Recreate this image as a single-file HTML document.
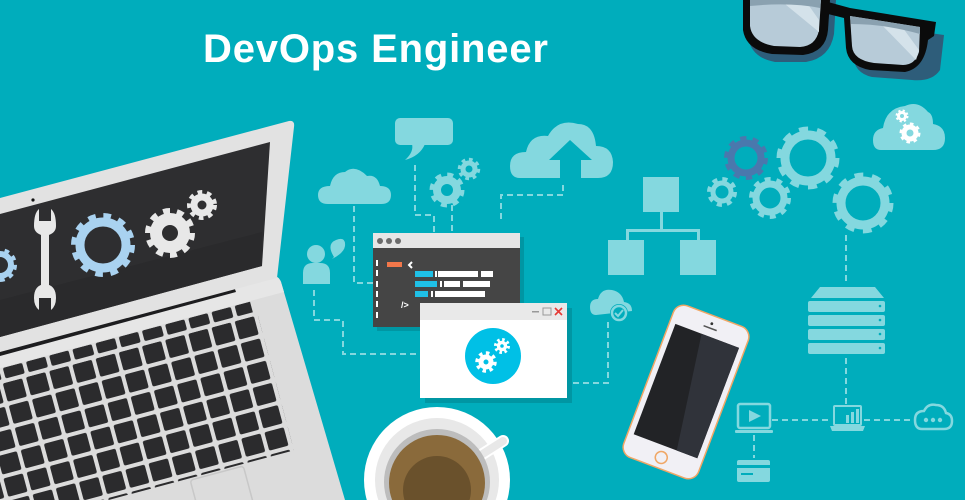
<!DOCTYPE html>
<html><head><meta charset="utf-8"><style>
html,body{margin:0;padding:0;background:#00adbc;overflow:hidden;width:965px;height:500px}
svg{display:block}
</style></head><body>
<svg width="965" height="500" viewBox="0 0 965 500" xmlns="http://www.w3.org/2000/svg">
<defs>
<pattern id="keysF" patternUnits="userSpaceOnUse" width="24" height="13" x="-2" y="18"><rect x="0" y="0" width="20" height="11" rx="2" fill="#2b2b2d"/></pattern>
<pattern id="keysM" patternUnits="userSpaceOnUse" width="24" height="23" x="-6" y="33"><rect x="0" y="0" width="20" height="19" rx="2" fill="#2b2b2d"/></pattern>
<clipPath id="vp"><rect width="965" height="500"/></clipPath>
</defs>
<g clip-path="url(#vp)">
<rect width="965" height="500" fill="#00adbc"/>

<!-- title -->
<text x="203" y="62" font-family="Liberation Sans, Arial, sans-serif" font-weight="bold" font-size="40" fill="#fff" textLength="345">DevOps Engineer</text>

<!-- glasses -->
<g>
 <path d="M748,0 L836,0 L834,34 Q830,58 806,62 L775,62 Q752,58 748,38 Z" fill="#2e5d7a"/>
 <path d="M852,22 L944,35 L940,70 Q932,82 912,80 L872,77 Q854,73 853,55 Z" fill="#2e5d7a"/>
 <path d="M743,0 L830,0 L828,30 Q826,52 803,55 L772,54 Q746,50 743,30 Z" fill="#0b0b0b"/>
 <path d="M828,2 L850,8 L936,22 L934,36 L928,40 Q925,68 905,72 L870,70 Q848,66 846,48 L844,18 L828,14 Z" fill="#0b0b0b"/>
 <path d="M750,0 L821,0 L819,30 Q816,46 800,47 L774,46 Q752,42 750,26 Z" fill="#b7cbd8"/>
 <path d="M850,16 L920,27 L919,52 Q915,65 903,65 L874,63 Q853,60 852,46 Z" fill="#b7cbd8"/>
 <path d="M780,0 L805,0 L819,20 L819,32 Z" fill="#d4e2ea"/>
 <path d="M878,21 L900,24 L919,50 L916,60 Z" fill="#d4e2ea"/>
 <path d="M750,0 L821,0 L820,8 Q790,2 750,6 Z" fill="#8aa1b0"/>
 <path d="M850,16 L920,27 L920,34 Q885,24 851,24 Z" fill="#8aa1b0"/>
</g>

<!-- dashed connectors -->
<g fill="none" stroke="#84d8df" stroke-width="2" stroke-dasharray="6 4">
 <path d="M354,206 V283 H373"/>
 <path d="M415,165 V215 H434 V233"/>
 <path d="M452,205 V233"/>
 <path d="M563,185 V195 H501 V220"/>
 <path d="M314,290 V320 H343 V354 H420"/>
 <path d="M608,322 V383 H567"/>
 <path d="M846,235 V285"/>
 <path d="M846,358 V405"/>
 <path d="M772,420 H832"/>
 <path d="M864,420 H912"/>
 <path d="M754,435 V458"/>
</g>

<!-- light icons -->
<g fill="#84d8df">
 <rect x="395" y="118" width="58" height="27" rx="5"/>
 <path d="M412,144 L425,144 Q420,156 405,160 Q414,152 412,144 Z"/>
 <path d="M328,204 Q318,204 318,195 Q318,186 330,186 Q333,172 345,172 Q355,164 367,176 Q377,174 380,186 Q391,186 391,195 Q391,204 381,204 Z"/>
 <path d="M520,178 Q510,178 510,166 Q510,152 526,152 Q530,134 548,136 Q558,118 578,124 Q594,124 596,146 Q612,146 613,162 Q613,178 598,178 L581,178 L581,160 L592,160 L570,140 L549,160 L560,160 L560,178 Z"/>
 <rect x="643" y="177" width="36" height="35"/>
 <rect x="608" y="240" width="36" height="35"/>
 <rect x="680" y="240" width="36" height="35"/>
 <path d="M660,212 h3 v17 h37 v11 h-3 v-8 h-68 v8 h-3 v-11 h34 z"/>
 <circle cx="316" cy="254" r="9"/>
 <path d="M303,284 V273 Q303,263 313,263 H320 Q330,263 330,273 V284 Z"/>
 <path d="M334,257 Q326,244 336,240 Q346,236 345,246 Q344,253 332,259 Z"/>
 <path d="M596,315 Q590,315 590,307 Q590,299 598,299 Q601,288 612,290 Q622,292 624,302 Q632,303 632,311 Z"/>
 <circle cx="619" cy="313" r="9" fill="#00adbc"/>
 <circle cx="619" cy="313" r="7" fill="none" stroke="#84d8df" stroke-width="2.5"/>
 <path d="M615,313 l3,3 l5,-6" fill="none" stroke="#84d8df" stroke-width="2"/>
 <path d="M820,287 H875 L884,298 H811 Z"/>
 <rect x="808" y="301" width="77" height="11" rx="2"/>
 <rect x="808" y="315" width="77" height="11" rx="2"/>
 <rect x="808" y="329" width="77" height="11" rx="2"/>
 <rect x="808" y="343" width="77" height="11" rx="2"/>
 <g fill="#00adbc"><circle cx="880" cy="306" r="1.3"/><circle cx="880" cy="320" r="1.3"/><circle cx="880" cy="334" r="1.3"/><circle cx="880" cy="348" r="1.3"/></g>
 <path d="M881,150 Q873,150 873,140 Q873,130 883,128 Q886,108 905,106 Q918,100 928,112 Q933,114 933,124 Q945,126 945,138 Q945,150 933,150 Z"/>
 <rect x="738" y="404" width="32" height="24" rx="2" fill="none" stroke="#84d8df" stroke-width="2.5"/>
 <path d="M749,410 L761,416 L749,422 Z"/>
 <rect x="735" y="430" width="38" height="3" rx="1"/>
 <rect x="737" y="460" width="33" height="22" rx="2"/>
 <rect x="737" y="465" width="33" height="3" fill="#00adbc"/>
 <rect x="741" y="473" width="12" height="2" fill="#00adbc"/>
 <rect x="834" y="406" width="27" height="19" rx="1" fill="none" stroke="#84d8df" stroke-width="2"/>
 <rect x="846" y="415" width="3" height="8"/><rect x="851" y="412" width="3" height="11"/><rect x="856" y="409" width="3" height="14"/>
 <path d="M830,426 H865 L863,431 H832 Z"/>
 <path d="M922,429 Q915,429 915,420 Q915,411 924,411 Q928,403 936,405 Q944,405 946,413 Q952,414 952,421 Q952,429 944,429 Z" fill="none" stroke="#84d8df" stroke-width="2.5"/>
 <circle cx="926" cy="420" r="2.2"/><circle cx="933" cy="420" r="2.2"/><circle cx="940" cy="420" r="2.2"/>
</g>

<!-- gears -->
<g fill="none">
 <g stroke="#84d8df">
  <circle cx="447" cy="190" r="10" stroke-width="8"/><circle cx="447" cy="190" r="15" stroke-width="5" stroke-dasharray="5.9 5.9"/>
  <circle cx="469" cy="169" r="6" stroke-width="5"/><circle cx="469" cy="169" r="9.5" stroke-width="3.5" stroke-dasharray="3.7 3.7"/>
  <circle cx="808" cy="158" r="23" stroke-width="9"/><circle cx="808" cy="158" r="29" stroke-width="5" stroke-dasharray="9.1 9.1"/>
  <circle cx="722" cy="192" r="9" stroke-width="5"/><circle cx="722" cy="192" r="13" stroke-width="4" stroke-dasharray="5.1 5.1"/>
  <circle cx="770" cy="198" r="14" stroke-width="7"/><circle cx="770" cy="198" r="19" stroke-width="4" stroke-dasharray="6 6"/>
  <circle cx="863" cy="203" r="22" stroke-width="9"/><circle cx="863" cy="203" r="28" stroke-width="5" stroke-dasharray="8.8 8.8"/>
 </g>
 <g stroke="#4a78ad">
  <circle cx="746" cy="158" r="15" stroke-width="7"/><circle cx="746" cy="158" r="20" stroke-width="4" stroke-dasharray="6.3 6.3"/>
 </g>
 <g stroke="#fff">
  <circle cx="910" cy="133" r="6" stroke-width="5"/><circle cx="910" cy="133" r="9" stroke-width="3" stroke-dasharray="3.5 3.5"/>
  <circle cx="902" cy="116" r="3.5" stroke-width="3"/><circle cx="902" cy="116" r="5.5" stroke-width="2" stroke-dasharray="2.2 2.2"/>
 </g>
</g>

<!-- code window -->
<rect x="377" y="237" width="147" height="94" fill="#0096a3"/>
<rect x="373" y="233" width="147" height="94" fill="#454545"/>
<rect x="373" y="233" width="147" height="15" fill="#e6e6e6"/>
<g fill="#6b6b6b"><circle cx="380" cy="241" r="3"/><circle cx="389" cy="241" r="3"/><circle cx="398" cy="241" r="3"/></g>
<g fill="#fff">
 <rect x="376" y="260" width="2" height="6"/><rect x="376" y="270" width="2" height="6"/><rect x="376" y="281" width="2" height="6"/><rect x="376" y="291" width="2" height="6"/><rect x="376" y="301" width="2" height="6"/><rect x="376" y="312" width="2" height="6"/>
 <path d="M412,262 L409,265 L412,268" fill="none" stroke="#fff" stroke-width="2"/>
 <rect x="438" y="271" width="40" height="6"/><rect x="481" y="271" width="12" height="6"/>
 <rect x="444" y="281" width="16" height="6"/><rect x="463" y="281" width="27" height="6"/>
 <rect x="435" y="291" width="50" height="6"/>
 <rect x="435" y="271" width="2" height="6"/><rect x="440" y="281" width="2" height="6"/><rect x="431" y="291" width="2" height="6"/>
 <text x="401" y="308" font-family="Liberation Sans, sans-serif" font-size="9" font-weight="bold" fill="#fff">/&gt;</text>
</g>
<rect x="387" y="262" width="15" height="5" fill="#f2774a"/>
<rect x="415" y="271" width="18" height="6" fill="#1fc0e6"/>
<rect x="415" y="281" width="22" height="6" fill="#1fc0e6"/>
<rect x="415" y="291" width="13" height="6" fill="#1fc0e6"/>

<!-- white window -->
<rect x="425" y="308" width="147" height="95" fill="#0096a3"/>
<rect x="420" y="303" width="147" height="95" fill="#fff"/>
<rect x="420" y="303" width="147" height="17" fill="#e9e9e9"/>
<rect x="532" y="311" width="7" height="1.5" fill="#999"/>
<rect x="543" y="308" width="8" height="7" fill="none" stroke="#999" stroke-width="1"/>
<path d="M555,308 L562,315 M562,308 L555,315" stroke="#e53935" stroke-width="1.6"/>
<circle cx="493" cy="356" r="28" fill="#00c0e6"/>
<g fill="none" stroke="#fff">
 <circle cx="486" cy="362" r="5" stroke-width="5"/><circle cx="486" cy="362" r="9" stroke-width="3.5" stroke-dasharray="3.5 3.5"/>
 <circle cx="502" cy="346" r="3.5" stroke-width="3.5"/><circle cx="502" cy="346" r="6.5" stroke-width="3" stroke-dasharray="2.55 2.55"/>
</g>

<!-- phone -->
<g transform="translate(686,392) rotate(20.7)">
 <rect x="-40" y="-81" width="80" height="162" rx="11" fill="#f1f0f5" stroke="#f0a766" stroke-width="1.5"/>
 <rect x="-34" y="-60" width="68" height="118" fill="#222326"/>
 <path d="M-6,-60 L34,-60 L34,58 L12,58 Z" fill="#30333a"/>
 <rect x="-7" y="-69" width="14" height="1.5" fill="#555"/>
 <circle cx="0" cy="-73" r="1.4" fill="#333"/>
 <circle cx="0" cy="70" r="6" fill="none" stroke="#f0a766" stroke-width="1.5"/>
</g>

<!-- coffee -->
<circle cx="437" cy="480" r="73" fill="#fff"/>
<circle cx="437" cy="480" r="62" fill="#e8e8e8"/>
<path d="M470,462 L503,441" stroke="#fff" stroke-width="12" stroke-linecap="round"/>
<path d="M470,462 L503,441" stroke="#e8e8e8" stroke-width="8" stroke-linecap="round"/>
<circle cx="437" cy="482" r="53" fill="#bdbdbd"/>
<circle cx="437" cy="483" r="48" fill="#8a6a3b"/>
<circle cx="437" cy="490" r="34" fill="#6a512c"/>

<!-- laptop -->
<path d="M0,352 L268,276 Q278,274 281,282 L345,500 L0,500 Z" fill="#dcdcdc"/>
<path d="M0,352 L268,276 Q278,274 281,282 L284,292 L0,368 Z" fill="#e6e6e6"/>
<g transform="translate(0,350) rotate(-15)">
 <rect x="-120" y="18" width="374" height="12" fill="url(#keysF)"/>
 <rect x="-120" y="33" width="378" height="140" fill="url(#keysM)"/>
 <rect x="150" y="175" width="55" height="40" rx="3" fill="none" stroke="#c8c8c8" stroke-width="1.5"/>
</g>
<path d="M0,344 L232,281 L236,292 L0,356 Z" fill="#1d1d1f"/>
<path d="M0,198 L289,121 Q295,120 294,127 L277,278 L0,352 Z" fill="#e2e2e2"/>
<path d="M0,214 L270,142 L262,266 L0,337 Z" fill="#2e2e30"/>
<path d="M0,300 L262,232 L262,266 L0,337 Z" fill="#2a2a2c"/>
<circle cx="33" cy="200" r="1.6" fill="#111"/>
<g fill="none">
 <circle cx="103" cy="245" r="23" stroke="#a9d2f0" stroke-width="9"/>
 <circle cx="103" cy="245" r="29" stroke="#a9d2f0" stroke-width="6" stroke-dasharray="7.6 7.6"/>
 <circle cx="0" cy="265" r="11" stroke="#a9d2f0" stroke-width="6"/>
 <circle cx="0" cy="265" r="15" stroke="#a9d2f0" stroke-width="4" stroke-dasharray="4.7 4.7"/>
 <circle cx="170" cy="233" r="14" stroke="#e8e8e8" stroke-width="12"/>
 <circle cx="170" cy="233" r="22" stroke="#e8e8e8" stroke-width="6" stroke-dasharray="6.9 6.9"/>
 <circle cx="202" cy="205" r="8" stroke="#e8e8e8" stroke-width="7"/>
 <circle cx="202" cy="205" r="13" stroke="#e8e8e8" stroke-width="4" stroke-dasharray="4.7 4.7"/>
</g>
<g fill="#e8e8e8">
 <rect x="41" y="232" width="8" height="56"/>
 <path d="M34,226 Q34,213 39,209 L39,221 L51,221 L51,209 Q56,213 56,226 Q56,234 45,236 Q34,234 34,226 Z"/>
 <path d="M34,298 Q34,285 45,284 Q56,285 56,298 Q56,306 51,310 L51,298 L39,298 L39,310 Q34,306 34,298 Z"/>
</g>
</g>
</svg>
</body></html>
